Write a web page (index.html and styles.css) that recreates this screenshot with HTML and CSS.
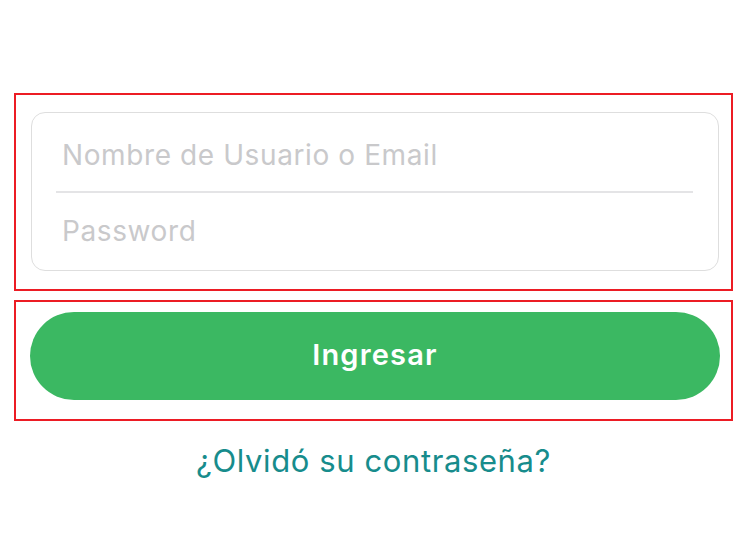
FILE: index.html
```html
<!DOCTYPE html>
<html lang="es">
<head>
<meta charset="utf-8">
<link rel="stylesheet" href="styles.css">
</head>
<body>
<main class="page">
  <section class="frame frame-fields">
    <div class="fields">
      <div class="field field-top"><span class="placeholder">Nombre de Usuario o Email</span></div>
      <div class="field field-bottom"><span class="placeholder">Password</span></div>
    </div>
  </section>
  <section class="frame frame-button">
    <button class="btn">Ingresar</button>
  </section>
  <a class="forgot" href="#">¿Olvidó su contraseña?</a>
</main>
</body>
</html>
```
FILE: styles.css
```css
html, body {
  margin: 0;
  padding: 0;
  background: #ffffff;
}
body {
  font-family: Inter, "Noto Sans", "Liberation Sans", sans-serif;
}
.page {
  display: flex;
  flex-direction: column;
  padding: 93px 17px 0 14px;
}
.frame {
  border: 2px solid #ec1c24;
  box-sizing: border-box;
  width: 719px;
}
.frame-fields {
  height: 198px;
  padding: 17px 12px 0 15px;
}
.fields {
  border: 1px solid #dedede;
  border-radius: 14px;
  height: 159px;
  box-sizing: border-box;
  display: flex;
  flex-direction: column;
}
.field {
  flex: 1;
  display: flex;
  align-items: center;
  margin: 0 25px 0 24px;
}
.field-top {
  border-bottom: 2px solid #e4e4e6;
}
.placeholder {
  padding-left: 6px;
  font-size: 28px;
  color: #c9c9cb;
  letter-spacing: 0.6px;
}
.field-top .placeholder { padding-top: 6px; }
.field-bottom .placeholder { padding-top: 0; }
.frame-button {
  margin-top: 9px;
  height: 121px;
  padding: 10px 11px 0 14px;
}
.btn {
  display: block;
  width: 100%;
  height: 88px;
  border: none;
  border-radius: 44px;
  background: #3bb862;
  color: #ffffff;
  font-family: Inter, "Noto Sans", "Liberation Sans", sans-serif;
  font-size: 29px;
  font-weight: 600;
  letter-spacing: 1.2px;
  padding: 0 0 4px 0;
  cursor: pointer;
}
.forgot {
  align-self: center;
  margin-top: 21px;
  font-size: 31px;
  letter-spacing: 0.6px;
  color: #178c8c;
  text-decoration: none;
}
```
